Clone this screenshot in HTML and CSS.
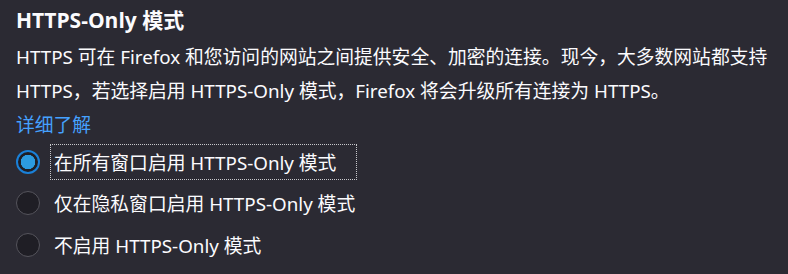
FILE: index.html
```html
<!DOCTYPE html>
<html lang="zh-CN">
<head>
    <meta charset="UTF-8">
    <title>HTTPS-Only 模式</title>
    <link rel="stylesheet" href="styles.css">
</head>
<body>
    <div class="section">
        <h2 class="title">HTTPS-Only 模式</h2>
        <p class="desc">HTTPS 可在 Firefox 和您访问的网站之间提供安全、加密的连接。现今，大多数网站都支持<br>HTTPS，若选择启用 HTTPS-Only 模式，Firefox 将会升级所有连接为 HTTPS。</p>
        <a class="more" href="#">详细了解</a>

        <div class="options">
            <label class="option">
                <input type="radio" name="https-mode" checked>
                <span class="radio"></span>
                <span class="label focused">在所有窗口启用 HTTPS-Only 模式</span>
            </label>
            <label class="option">
                <input type="radio" name="https-mode">
                <span class="radio"></span>
                <span class="label">仅在隐私窗口启用 HTTPS-Only 模式</span>
            </label>
            <label class="option">
                <input type="radio" name="https-mode">
                <span class="radio"></span>
                <span class="label">不启用 HTTPS-Only 模式</span>
            </label>
        </div>
    </div>
</body>
</html>
```

FILE: styles.css
```css
* {
    margin: 0;
    padding: 0;
    box-sizing: border-box;
}

body {
    background-color: #2b2a33;
    color: #fbfbfe;
    font-family: "Noto Sans", "Noto Sans CJK SC", sans-serif;
    font-size: 18.8px;
    width: 788px;
    height: 274px;
    overflow: hidden;
}

.section {
    padding: 4px 16px 0;
}

.title {
    font-family: "Open Sans", "Noto Sans CJK SC", sans-serif;
    font-size: 21px;
    font-weight: 700;
    line-height: 32px;
    margin-bottom: 4px;
}

.desc {
    line-height: 34px;
    white-space: nowrap;
}

.more {
    display: inline-block;
    color: #45a1ff;
    text-decoration: none;
    line-height: 34px;
}

.options {
    display: flex;
    flex-direction: column;
    margin-top: -1px;
}

.option {
    display: flex;
    align-items: center;
    height: 41.5px;
    cursor: pointer;
}

.option input {
    display: none;
}

.radio {
    width: 24px;
    height: 24px;
    border-radius: 50%;
    border: 1.5px solid #55545c;
    background: #1f1e25;
    margin-right: 10px;
    flex-shrink: 0;
}

.option input:checked + .radio {
    border: 2px solid #1a80d8;
    background: radial-gradient(circle, #2c9be0 0 7px, #1f1e25 7.5px);
}

.label {
    padding: 3px 20px 3px 3px;
    border: 1px dotted transparent;
}

.label.focused {
    border-color: #c8c8cc;
}
```
